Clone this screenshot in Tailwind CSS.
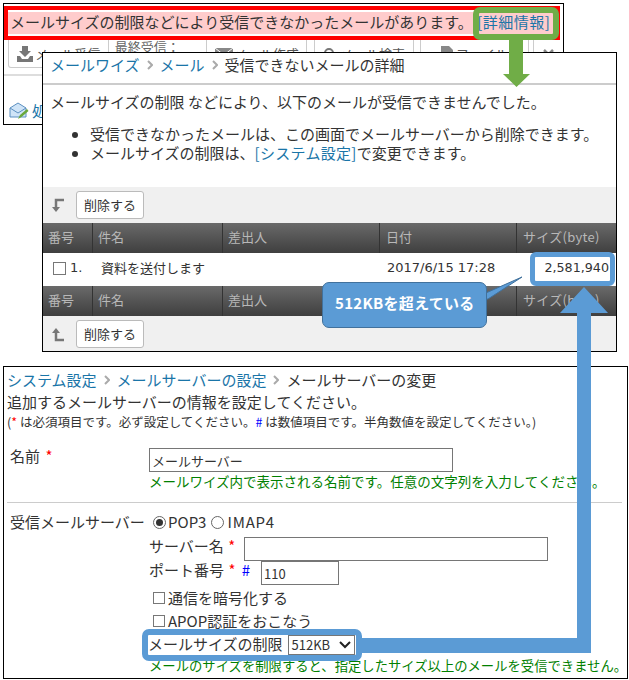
<!DOCTYPE html>
<html lang="ja">
<head>
<meta charset="utf-8">
<script src="https://cdn.jsdelivr.net/npm/@tailwindcss/browser@4"></script>
</head>
<body class="bg-white">
<div class="relative w-[629px] h-[680px] overflow-hidden bg-white text-[#333] text-[15px] leading-[20px] font-['Noto_Sans_CJK_JP',sans-serif]">

  <!-- Back window: mail list -->
  <div class="absolute left-[3px] top-[3px] w-[561px] h-[122px] border border-black overflow-hidden">
    <div class="mt-[2px] mr-[3px] border-4 border-[#ff0000] h-[34px] bg-white">
      <div class="mt-[2px] h-[22px] bg-[#ffcccc] pl-[2px] leading-[20px] whitespace-nowrap">メールサイズの制限などにより受信できなかったメールがあります。 <a class="ml-[1px] tracking-[0.5px] text-[#1a75a8]">[詳細情報]</a></div>
    </div>
    <div class="flex items-start pl-[4px] h-[36px] border-b-2 border-[#ddd] text-[13px] text-[#555]">
      <div class="w-[102px] h-[28px] border border-t-0 border-[#ccc] rounded-b-[3px] flex items-center justify-center gap-[1px]">
        <svg width="18" height="18" viewBox="0 0 18 18"><path d="M6 1h6v5h3l-6 6-6-6h3z" fill="#777"/><path d="M1 11h3l2 3h6l2-3h3v6H1z" fill="#777"/></svg>メール受信
      </div>
      <div class="w-[93px] ml-[6px] leading-[14px] text-[#666]">最終受信：</div>
      <div class="w-[102px] h-[28px] border border-t-0 border-[#ccc] rounded-b-[3px] flex items-center justify-center gap-[1px]">
        <svg width="18" height="14" viewBox="0 0 18 14"><path d="M0 1h18v12H0z" fill="#888"/><path d="M0 1l9 7 9-7" fill="none" stroke="#fff"/></svg>メール作成
      </div>
      <div class="w-[101px] h-[28px] ml-[7px] border border-t-0 border-[#ccc] rounded-b-[3px] flex items-center justify-center gap-[3px]">
        <svg width="14" height="14" viewBox="0 0 14 14"><circle cx="6" cy="6" r="4" fill="none" stroke="#777" stroke-width="2"/><path d="M9 9l4 4" stroke="#777" stroke-width="2"/></svg>メール検索
      </div>
      <div class="w-[111px] h-[28px] ml-[6px] border border-t-0 border-[#ccc] rounded-b-[3px] flex items-center justify-center gap-[3px]">
        <svg width="12" height="16" viewBox="0 0 12 16"><path d="M0 0h8l4 4v12H0z" fill="#888"/></svg>ファイル
      </div>
      <div class="w-[30px] h-[28px] ml-[4px] border-l border-[#ccc] flex items-center justify-center">
        <svg width="11" height="11" viewBox="0 0 11 11"><path d="M1 1l9 9M10 1l-9 9" stroke="#888" stroke-width="2.500"/></svg>
      </div>
    </div>
    <div class="flex items-center gap-[3px] pl-[5px] mt-[25px]">
      <svg width="20" height="20" viewBox="0 0 20 20"><path d="M1 7l8-5 8 5v9H1z" fill="#cfe4f7" stroke="#5b8fc0"/><path d="M1 7l8 5 8-5" fill="none" stroke="#5b8fc0"/><path d="M9 18l2-4 7-6 1.500 2-7 6z" fill="#6aa83a"/></svg>
      <a class="text-[#1a75a8]">処理</a>
    </div>
  </div>

  <!-- Detail window -->
  <div class="absolute left-[42px] top-[52px] w-[575px] h-[300px] border border-black bg-white flex flex-col overflow-hidden">
    <div class="h-[32px] shrink-0 border-b-2 border-[#ccc] pl-[7px] pb-[6px] flex items-center gap-[7px]">
      <a class="text-[#1a75a8]">メールワイズ</a>
      <svg width="6" height="10" viewBox="0 0 6 10"><path d="M1 1l4 4-4 4" fill="none" stroke="#aaa" stroke-width="2"/></svg>
      <a class="text-[#1a75a8]">メール</a>
      <svg width="6" height="10" viewBox="0 0 6 10"><path d="M1 1l4 4-4 4" fill="none" stroke="#aaa" stroke-width="2"/></svg>
      <span>受信できないメールの詳細</span>
    </div>
    <p class="pl-[7px] mt-[7px]">メールサイズの制限 などにより、以下のメールが受信できませんでした。</p>
    <ul class="list-disc pl-[47px] mt-[12px] leading-[19px]">
      <li>受信できなかったメールは、この画面でメールサーバーから削除できます。</li>
      <li>メールサイズの制限は、<a class="tracking-[0.3px] text-[#1a75a8]">[システム設定]</a>で変更できます。</li>
    </ul>
    <div class="mt-[25px] h-[36px] shrink-0 bg-[#f0f0f0] flex items-center pl-[8px] gap-[11px]">
      <svg width="14" height="16" viewBox="0 0 14 16"><path d="M13 3H5v9" fill="none" stroke="#777" stroke-width="2.500"/><path d="M1 10h8l-4 5z" fill="#777"/></svg>
      <button class="h-[28px] w-[68px] bg-white border border-[#bbb] rounded-[3px] text-[13px] leading-[24px]">削除する</button>
    </div>
    <div class="h-[30px] shrink-0 grid grid-cols-[50px_130px_157px_137px_1fr] bg-linear-to-b from-[#6a6a6a] to-[#3f3f3f] text-[13px] text-[#b8b8b8] leading-[28px]">
      <div class="pl-[5px] border-r border-[#333]">番号</div><div class="pl-[5px] border-r border-[#333]">件名</div><div class="pl-[5px] border-r border-[#333]">差出人</div><div class="pl-[6px] border-r border-[#333]">日付</div><div class="pl-[6px] whitespace-nowrap tracking-[0.3px]">サイズ(byte)</div>
    </div>
    <div class="h-[33px] shrink-0 grid grid-cols-[50px_130px_157px_137px_1fr] text-[13px] items-center pb-[3px]">
      <div class="flex items-center pl-[10px] gap-[4px]"><span class="w-[13px] h-[13px] border border-[#777] bg-white"></span><span class="font-['DejaVu_Sans',sans-serif]">1.</span></div>
      <div class="pl-[8px]">資料を送付します</div><div></div>
      <div class="pl-[7px] whitespace-nowrap font-['DejaVu_Sans',sans-serif]">2017/6/15 17:28</div>
      <div class="text-right pr-[7px] text-[12.700px] font-['DejaVu_Sans',sans-serif]">2,581,940</div>
    </div>
    <div class="h-[30px] shrink-0 grid grid-cols-[50px_130px_157px_137px_1fr] bg-linear-to-b from-[#6a6a6a] to-[#3f3f3f] text-[13px] text-[#b8b8b8] leading-[28px]">
      <div class="pl-[5px] border-r border-[#333]">番号</div><div class="pl-[5px] border-r border-[#333]">件名</div><div class="pl-[5px] border-r border-[#333]">差出人</div><div class="pl-[6px] border-r border-[#333]">日付</div><div class="pl-[6px] whitespace-nowrap tracking-[0.3px]">サイズ(byte)</div>
    </div>
    <div class="flex-1 bg-[#f0f0f0] flex items-center pl-[8px] gap-[11px]">
      <svg width="14" height="16" viewBox="0 0 14 16"><path d="M5 5v9h8" fill="none" stroke="#777" stroke-width="2.500"/><path d="M1 7h8L5 2z" fill="#777"/></svg>
      <button class="h-[28px] w-[68px] bg-white border border-[#bbb] rounded-[3px] text-[13px] leading-[24px]">削除する</button>
    </div>
  </div>

  <!-- Settings window -->
  <div class="absolute left-[3px] top-[366px] w-[625px] h-[313px] border border-black bg-white pl-[3px]">
    <div class="flex items-center gap-[7px] h-[20px] mt-[3px]">
      <a class="text-[#1a75a8]">システム設定</a>
      <svg width="6" height="10" viewBox="0 0 6 10"><path d="M1 1l4 4-4 4" fill="none" stroke="#aaa" stroke-width="2"/></svg>
      <a class="text-[#1a75a8]">メールサーバーの設定</a>
      <svg width="6" height="10" viewBox="0 0 6 10"><path d="M1 1l4 4-4 4" fill="none" stroke="#aaa" stroke-width="2"/></svg>
      <span>メールサーバーの変更</span>
    </div>
    <p class="mt-[2px]">追加するメールサーバーの情報を設定してください。</p>
    <p class="text-[12.500px] leading-[18px] mt-[1px] whitespace-nowrap">(<span class="text-[#ff0000]">*</span> は必須項目です。必ず設定してください。<span class="text-[#0000ff]">#</span> は数値項目です。半角数値を設定してください。)</p>
    <div class="grid grid-cols-[142px_1fr] mt-[17px]">
      <div class="pl-[3px] leading-[16px]">名前 <span class="ml-[2px] text-[#ff0000]">*</span></div>
      <div>
        <input value="メールサーバー" class="block w-[304px] h-[24px] border border-[#767676] px-[2px] text-[13px] bg-white">
        <p class="text-[13.500px] leading-[19px] text-[#008000] whitespace-nowrap">メールワイズ内で表示される名前です。任意の文字列を入力してください。</p>
      </div>
    </div>
    <div class="border-t border-[#ccc] mt-[11px] mr-[5px]"></div>
    <div class="flex items-center h-[24px] mt-[7px] pl-[3px]">
      <span class="w-[143px] whitespace-nowrap">受信メールサーバー</span>
      <span class="w-[13px] h-[13px] rounded-full border border-[#666] flex items-center justify-center"><span class="w-[7px] h-[7px] rounded-full bg-[#333]"></span></span>
      <span class="ml-[2px]">POP3</span>
      <span class="ml-[5px] w-[13px] h-[13px] rounded-full border border-[#666]"></span>
      <span class="ml-[3px] tracking-[0.8px]">IMAP4</span>
    </div>
    <div class="flex items-center h-[24px] mt-[3px] pl-[142px]">
      <span class="w-[95px] pb-[6px]">サーバー名 <span class="ml-[1px] text-[#ff0000]">*</span></span>
      <input class="w-[304px] h-[24px] border border-[#767676] bg-white">
    </div>
    <div class="flex items-center h-[24px] pl-[142px]">
      <span class="w-[112px] pb-[6px] whitespace-nowrap">ポート番号 <span class="ml-[1px] text-[#ff0000]">*</span> <span class="ml-[3px] text-[#0000ff]">#</span></span>
      <input value="110" class="w-[78px] h-[24px] border border-[#767676] px-[2px] text-[13px] bg-white">
    </div>
    <div class="flex items-center h-[23px] pl-[146px] mt-[1px]"><span class="w-[12px] h-[12px] border border-[#777] mr-[3px]"></span>通信を暗号化する</div>
    <div class="flex items-center h-[23px] pl-[146px]"><span class="w-[12px] h-[12px] border border-[#777] mr-[3px]"></span>APOP認証をおこなう</div>
    <div class="flex items-center h-[23px] pl-[141px]">
      <span class="whitespace-nowrap">メールサイズの制限</span>
      <span class="ml-[5px] mt-[2px] w-[67px] h-[20px] border border-[#767676] text-[13px] flex items-center justify-between px-[3px]">512KB
        <svg width="12" height="8" viewBox="0 0 12 8"><path d="M1 1l5 5 5-5" fill="none" stroke="#222" stroke-width="2"/></svg>
      </span>
    </div>
    <p class="text-[13.330px] leading-[20px] mt-[1px] pl-[142px] text-[#008000] whitespace-nowrap">メールのサイズを制限すると、指定したサイズ以上のメールを受信できません。</p>
  </div>

  <!-- Annotations -->
  <div class="absolute left-[473px] top-[7px] w-[86px] h-[33px] border-[6px] border-[#70ad47] rounded-[7px]"></div>
  <div class="absolute left-[530px] top-[252px] w-[85px] h-[34px] border-[5px] border-[#5b9bd5] rounded-[6px]"></div>
  <div class="absolute left-[142px] top-[629px] w-[220px] h-[32px] border-[6px] border-[#5b9bd5] rounded-[7px]"></div>
  <svg class="absolute left-0 top-0" width="629" height="680" viewBox="0 0 629 680">
    <path d="M509 39h14v35h7l-13.500 13L503 74h6z" fill="#70ad47"/>
    <path d="M577 638V313h-17l24-26 24 26h-17v340H361v-15z" fill="#5b9bd5"/>
    <path d="M470 300l52-23-34 22z" fill="#5b9bd5" stroke="#41719c"/>
  </svg>
  <div class="absolute left-[322px] top-[282px] w-[165px] h-[46px] bg-[#5b9bd5] border border-[#41719c] rounded-[7px] text-white font-bold text-[15px] tracking-[0.3px] leading-[40px] pl-[12px] whitespace-nowrap">512KBを超えている</div>
</div>
</body>
</html>
